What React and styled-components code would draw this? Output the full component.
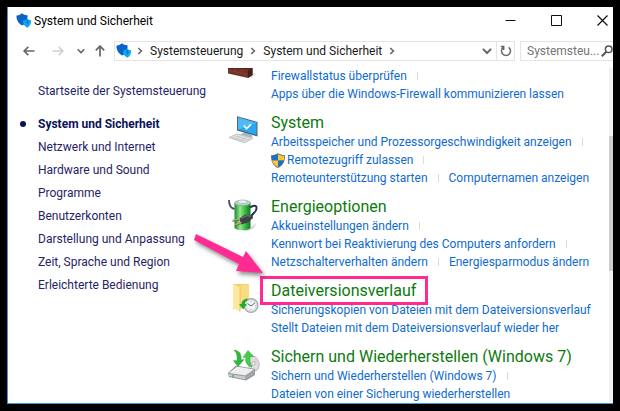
import React from "react";
import styled, { createGlobalStyle } from "styled-components";

const GlobalStyle = createGlobalStyle`
  *, *::before, *::after { box-sizing: border-box; }
  html, body, #root { height: 100%; }
  body {
    margin: 0;
    background: #000;
    font-family: Roboto, "Noto Sans", sans-serif;
    font-size: 12px;
    line-height: 18px;
    color: #1a1a1a;
  }
  a { text-decoration: none; color: inherit; white-space: nowrap; }
  button, input { font: inherit; color: inherit; }
  svg { display: block; flex: none; }
`;

const Desktop = styled.div`
  height: 100%;
  padding: 7px;
`;

const Window = styled.div`
  position: relative;
  height: 100%;
  display: flex;
  flex-direction: column;
  overflow: hidden;
  background: #fff;
  border-left: 1px solid #3a94d6;
  border-bottom: 1px solid #3a9ee0;
`;

const TitleBar = styled.header`
  flex: none;
  height: 27px;
  display: flex;
  align-items: center;
  padding-left: 8px;
`;

const Title = styled.h1`
  flex: 1;
  margin: 0 0 0 2px;
  font-size: 12px;
  font-weight: 400;
  color: #000;
  white-space: nowrap;
`;

const IconButton = styled.button`
  flex: none;
  display: flex;
  align-items: center;
  justify-content: center;
  width: ${(p) => p.$width}px;
  height: 100%;
  padding: 0;
  border: 0;
  background: none;
  color: ${(p) => p.$color || "#666"};
`;

const WindowButtons = styled.div`
  display: flex;
  align-self: stretch;
  margin-right: -12px;
`;

const NavBar = styled.nav`
  flex: none;
  display: flex;
  height: 20px;
  margin-top: 7px;
  padding-left: 10px;
`;

const AddressBar = styled.div`
  flex: 1;
  display: flex;
  align-items: center;
  min-width: 0;
  border: 1px solid #e4e4e4;
  padding-left: 1px;
`;

const Crumbs = styled.div`
  flex: 1;
  display: flex;
  align-items: center;
  gap: 6px;
  margin-left: 4px;
`;

const RefreshCell = styled.div`
  height: 100%;
  border-left: 1px solid #e4e4e4;
`;

const Search = styled.label`
  flex: none;
  display: flex;
  align-items: center;
  width: 93px;
  margin-left: 5px;
  border: 1px solid #e4e4e4;
  border-right: 0;
  color: #666;
`;

const SearchInput = styled.input`
  flex: 1;
  min-width: 0;
  padding: 0 0 0 6px;
  border: 0;
  outline: 0;
  background: none;
  &::placeholder { color: #757575; opacity: 1; }
`;

const Body = styled.div`
  flex: 1;
  min-height: 0;
  display: grid;
  grid-template-columns: 219px minmax(0, 1fr) 4px;
  margin-top: 7px;
`;

const Sidebar = styled.aside`
  padding: 12px 0 0 30px;
  color: #1f2466;
  line-height: 23px;
`;

const CategoryList = styled.ul`
  list-style: none;
  margin: 10px 0 0;
  padding: 0;
`;

const Category = styled.li`
  position: relative;
  font-weight: ${(p) => (p.$current ? 700 : 400)};
  color: ${(p) => (p.$current ? "#0b1257" : "inherit")};
  &::before {
    content: "";
    display: ${(p) => (p.$current ? "block" : "none")};
    position: absolute;
    left: -18px;
    top: 8px;
    width: 6px;
    height: 6px;
    border-radius: 50%;
    background: #0b1257;
  }
`;

const Content = styled.main`
  min-height: 0;
  overflow: hidden;
  display: flex;
  flex-direction: column;
  gap: 8px;
`;

const Section = styled.section`
  flex: none;
  display: grid;
  grid-template-columns: 34px minmax(0, 1fr);
  column-gap: 10px;
  margin-top: ${(p) => (p.$scrolled ? -1 : 0)}px;
`;

const IconSlot = styled.div`
  padding-top: ${(p) => (p.$scrolled ? 1 : 4)}px;
  padding-left: 1px;
`;

const Heading = styled.h2`
  margin: 0;
  padding-top: 2px;
  font-size: 16px;
  line-height: 20px;
  font-weight: 400;
  color: #0c7a0c;
`;

const TaskRow = styled.div`
  display: flex;
  align-items: center;
  height: 18px;
  color: #0f6bd0;
  white-space: nowrap;
`;

const Task = styled.a`
  display: flex;
  align-items: center;
  gap: 2px;
`;

const Separator = styled.span`
  width: 1px;
  height: 8px;
  margin: 0 10px;
  background: #d9d9d9;
`;

const Highlight = styled.span`
  position: relative;
  &::after {
    content: "";
    position: absolute;
    inset: -5px -12px -5px -11px;
    border: 3px solid #ff2a92;
  }
`;

const Scrollbar = styled.div`
  background: #f1f1f1;
  padding-top: 68px;
`;

const ScrollThumb = styled.div`
  height: 135px;
  background: #cdcdcd;
`;

const PointerArrow = styled.svg`
  position: absolute;
  left: 182px;
  top: 226px;
  filter: drop-shadow(2px 3px 2px rgba(0, 0, 0, 0.45));
`;

const SecurityIcon = () => (
  <svg width="16" height="16" viewBox="0 0 16 16">
    <path d="M.5 2.500C3 2.600 4.500 1.500 6 .3 7.500 1.500 9 2.300 11.500 2.200 12 7 10 10.500 6.300 12.500 2.500 10.500.2 7 .5 2.500Z" fill="#0a63c9" />
    <path d="M7 7.600C8.500 7.600 9.800 7 11.200 5.800 12.500 7 13.700 7.300 15 7.100 15.400 10.500 14 13.300 11.500 14.800 8.500 13.500 6.900 11 7 7.600Z" fill="#0baaf0" />
    <path d="m11.300 7-1.200 2.800h1.300l-.6 2.700 2.200-3.500h-1.400l.9-2Z" fill="#0a63c9" />
  </svg>
);

const Arrow = ({ turn = 0 }) => (
  <svg width="12" height="12" viewBox="0 0 12 12" fill="none" stroke="currentColor" strokeWidth="1.7">
    <path transform={`rotate(${turn} 6 6)`} d="M11.500 6H1M5.300 1.800 1.100 6l4.200 4.200" />
  </svg>
);

const Chevron = ({ down, size = 8 }) => (
  <svg width={size} height={size} viewBox="0 0 8 8" fill="none" stroke="#666" strokeWidth="1.6">
    <path d={down ? "M.7 2.300 4 5.600l3.300-3.300" : "M2.300 1 5.400 4 2.300 7"} />
  </svg>
);

const RefreshIcon = () => (
  <svg width="12" height="12" viewBox="0 0 12 12" fill="none" stroke="#666" strokeWidth="1.5">
    <path d="M8.700 2.300A4.500 4.500 0 1 1 3.300 2.300M3.700 5V1.500H.8" />
  </svg>
);

const SearchIcon = () => (
  <svg width="12" height="12" viewBox="0 0 12 12" fill="none" stroke="#555">
    <circle cx="7.700" cy="4.200" r="3.300" strokeWidth="1.500" />
    <path d="M5.300 6.700.8 11.200" strokeWidth="2" />
  </svg>
);

const FirewallIcon = () => (
  <svg width="30" height="12" viewBox="0 0 30 12">
    <path d="m21 8 6-3 1 1-5 4Z" fill="#bbb" opacity=".5" />
    <path d="M0 0h24.500v7L20 10 0 5.500Z" fill="#713126" />
    <path d="M20 2.500 24.500 0v7L20 10Z" fill="#43201b" />
    <path d="M0 2.500 20 6.500M7 0v4M14 0v5M10.500 4.500V8M17 6v3" stroke="#8d4a3a" strokeWidth=".6" />
    <path d="M0 0h24" stroke="#3d1d18" />
  </svg>
);

const ComputerIcon = () => (
  <svg width="32" height="30" viewBox="0 0 32 30">
    <path d="m18 16 7 5-3 2-10-3Z" fill="#aeb7bd" />
    <path d="M9 1.200 29.500 7v14.500L9 15.500Z" fill="#4b6675" />
    <path d="M10 2.600 28.500 7.800v12L10 14.500Z" fill="#28a7f3" />
    <path d="M10 2.600 28.500 7.800 10 14.500Z" fill="#4fbafa" />
    <path d="m16 10.500 2.500 3.200 4.600-4.600" fill="none" stroke="#fff" strokeWidth="1.600" />
    <path d="m1 22.500 8-3.700 16 4.400-8.500 4.600Z" fill="#dfe3e5" stroke="#b3babd" strokeWidth=".8" />
    <path d="m4 22.500 15 4M7 21l15 4M8 23.800l5-3.500M13 25.500l5.500-3.600" stroke="#b8bec1" strokeWidth=".6" />
  </svg>
);

const PowerIcon = () => (
  <svg width="32" height="34" viewBox="0 0 32 34">
    <defs>
      <linearGradient id="battery">
        <stop offset="0" stopColor="#168c28" />
        <stop offset=".35" stopColor="#8fe88a" />
        <stop offset=".65" stopColor="#3cbd46" />
        <stop offset="1" stopColor="#0b7a20" />
      </linearGradient>
    </defs>
    <path d="M14 30c6-1 11-2 14-6-1 6-6 8-12 8Z" fill="#bbb" opacity=".6" />
    <path d="M6.500 4v25c2 3 14 3 16 0V4Z" fill="url(#battery)" />
    <ellipse cx="14.500" cy="4" rx="8" ry="2.800" fill="#b9cfc4" stroke="#6d9a80" strokeWidth=".6" />
    <ellipse cx="14.500" cy="2.700" rx="4.200" ry="1.600" fill="#eef4fb" stroke="#9fabc2" strokeWidth=".5" />
    <path d="M1 1c0 5 1 8 5.500 9" fill="none" stroke="#454a66" strokeWidth="1.800" />
    <path d="M22 8.500c4-3 7-2 6.500 1-.5 4-3 4-5.500 8" fill="none" stroke="#2c3050" strokeWidth="2" />
    <path d="M11.500 19.500 17 15.500l7.500.5.500 3-5 4.500-7 2Z" fill="#3f3f46" />
    <path d="m13 19.500 5-2.700 5 .2" fill="none" stroke="#85858c" strokeWidth=".9" />
    <path d="m4.500 21.500 7.500-1.500M7 26l6.500-2.500" stroke="#c2a184" strokeWidth="1.700" />
    <path d="m4.500 22.500 7-1.500M7 27l6.500-2.500" stroke="#5a4334" strokeWidth=".6" />
  </svg>
);

const FileHistoryIcon = () => (
  <svg width="34" height="32" viewBox="0 0 34 32">
    <path d="M5 1h16v19l-9 6H5Z" fill="#f1cf69" />
    <path d="M12 3.500 14 1.500h7V23h-9Z" fill="#f8dc82" />
    <path d="m5 1 7 3.500v24L5 25Z" fill="#ffe9a0" />
    <path d="M12 4.500v24" stroke="#e0b650" strokeWidth=".7" />
    <circle cx="23" cy="22.500" r="6.900" fill="#d8dbdc" stroke="#a3a8aa" strokeWidth="1.200" />
    <circle cx="23" cy="22.500" r="5" fill="#f3f5f5" />
    <path d="m19.500 20.500 3.500 2.500 4-3.200" fill="none" stroke="#666" strokeWidth="1" />
    <path d="M23 18.300v1M23 26v1M27 23h1M18.500 23h1" stroke="#999" strokeWidth=".8" />
    <path d="M19.500 15.500c-4 .5-6 3-6 5.500H11l4.200 5.500L19 21h-2.200c0-2 1-3 2.700-3.500Z" fill="#25ab2b" />
  </svg>
);

const BackupIcon = () => (
  <svg width="34" height="34" viewBox="0 0 34 34">
    <ellipse cx="25.500" cy="14.500" rx="5.500" ry="7.500" fill="#dcdee2" stroke="#bbb" transform="rotate(-15 25.500 14.500)" />
    <path d="m25 14 3-6 3 5Z" fill="#f0c7d7" />
    <circle cx="25.500" cy="14.500" r="1.700" fill="#fff" stroke="#aaa" />
    <path d="m0 24 8-7.500L27 20v6L18 31.500 1 28Z" fill="#8f9396" />
    <path d="m1 24 8-6.500 17 3-8.500 6Z" fill="#eceeef" />
    <path d="m1 25 16.500 2.500v3L1 27Z" fill="#cbcfd1" />
    <path d="M17.500 27.500 26.500 21v4.500l-9 5Z" fill="#a3a7aa" />
    <circle cx="5" cy="27" r="1" fill="#20c83a" />
    <path d="M6 1c6 1 7.500 4 7 10l3-.5-6 7-4.500-6 3.500.5C9.500 7 9 4 6 1Z" fill="#33b93a" stroke="#1d9a2a" strokeWidth=".5" />
    <path d="M24 18c-6-2-7-6-6-10l-3 .5 5-7 5.500 6-3.500-.3c-.5 4 0 7 2 10.800Z" fill="#43d047" stroke="#1d9a2a" strokeWidth=".5" />
  </svg>
);

const UacShield = () => (
  <svg width="14" height="15" viewBox="0 0 14 15">
    <path d="M0 2.200C3 2.200 5 1.300 7 0c2 1.300 4 2.200 7 2.200C14.300 8 12 12.500 7 15 2 12.500-.3 8 0 2.200Z" fill="#6d7478" />
    <path d="M7 1v6.500H1C.8 6 .8 4.500 1 3 3.500 3 5.200 2.200 7 1Z" fill="#1672d1" />
    <path d="M7 1v6.500h6c.2-1.500.2-3 0-4.500C10.500 3 8.800 2.200 7 1Z" fill="#ffc62b" />
    <path d="M7 7.500V14c-3.300-1.700-5.300-3.800-6-6.500Z" fill="#ffc62b" />
    <path d="M7 7.500V14c3.300-1.700 5.300-3.800 6-6.500Z" fill="#1672d1" />
  </svg>
);

const MinimizeIcon = () => (
  <svg width="11" height="11" viewBox="0 0 11 11" stroke="#111"><path d="M.5 5.500h10" /></svg>
);
const MaximizeIcon = () => (
  <svg width="11" height="11" viewBox="0 0 11 11" fill="none" stroke="#111"><path d="M.5.5h10v10H.5Z" /></svg>
);
const CloseIcon = () => (
  <svg width="11" height="11" viewBox="0 0 11 11" stroke="#111" strokeWidth="1.200"><path d="m.5.5 10 10M10.500.5l-10 10" /></svg>
);

const categories = [
  "System und Sicherheit",
  "Netzwerk und Internet",
  "Hardware und Sound",
  "Programme",
  "Benutzerkonten",
  "Darstellung und Anpassung",
  "Zeit, Sprache und Region",
  "Erleichterte Bedienung",
];

// Each row lists its tasks; `open` adds a divider after the last one.
const sections = [
  {
    icon: FirewallIcon,
    rows: [
      { tasks: ["Firewallstatus überprüfen"], open: true },
      { tasks: ["Apps über die Windows-Firewall kommunizieren lassen"] },
    ],
  },
  {
    title: "System",
    icon: ComputerIcon,
    rows: [
      { tasks: ["Arbeitsspeicher und Prozessorgeschwindigkeit anzeigen"], open: true },
      { tasks: ["Remotezugriff zulassen"], open: true, shield: true },
      { tasks: ["Remoteunterstützung starten", "Computernamen anzeigen"] },
    ],
  },
  {
    title: "Energieoptionen",
    icon: PowerIcon,
    rows: [
      { tasks: ["Akkueinstellungen ändern"], open: true },
      { tasks: ["Kennwort bei Reaktivierung des Computers anfordern"], open: true },
      { tasks: ["Netzschalterverhalten ändern", "Energiesparmodus ändern"] },
    ],
  },
  {
    title: "Dateiversionsverlauf",
    icon: FileHistoryIcon,
    highlighted: true,
    rows: [
      { tasks: ["Sicherungskopien von Dateien mit dem Dateiversionsverlauf"] },
      { tasks: ["Stellt Dateien mit dem Dateiversionsverlauf wieder her"] },
    ],
  },
  {
    title: "Sichern und Wiederherstellen (Windows 7)",
    icon: BackupIcon,
    rows: [
      { tasks: ["Sichern und Wiederherstellen (Windows 7)"], open: true },
      { tasks: ["Dateien von einer Sicherung wiederherstellen"] },
    ],
  },
];

function Tasks({ tasks, open, shield }) {
  return (
    <TaskRow>
      {tasks.map((task, i) => (
        <React.Fragment key={task}>
          {i > 0 && <Separator />}
          <Task href="#">
            {shield && <UacShield />}
            {task}
          </Task>
        </React.Fragment>
      ))}
      {open && <Separator />}
    </TaskRow>
  );
}

export default function App() {
  return (
    <Desktop>
      <GlobalStyle />
      <Window>
        <TitleBar>
          <SecurityIcon />
          <Title>System und Sicherheit</Title>
          <WindowButtons>
            <IconButton $width={46} aria-label="Minimieren"><MinimizeIcon /></IconButton>
            <IconButton $width={46} aria-label="Maximieren"><MaximizeIcon /></IconButton>
            <IconButton $width={46} aria-label="Schließen"><CloseIcon /></IconButton>
          </WindowButtons>
        </TitleBar>
        <NavBar>
          <IconButton $width={21} aria-label="Zurück"><Arrow /></IconButton>
          <IconButton $width={37} $color="#d0d0d0" aria-label="Vorwärts"><Arrow turn={180} /></IconButton>
          <IconButton $width={10} aria-label="Verlauf"><Chevron down /></IconButton>
          <IconButton $width={28} aria-label="Nach oben"><Arrow turn={90} /></IconButton>
          <AddressBar>
            <SecurityIcon />
            <Crumbs>
              <Chevron />
              <a href="#">Systemsteuerung</a>
              <Chevron />
              <a href="#">System und Sicherheit</a>
              <Chevron />
            </Crumbs>
            <IconButton $width={18} aria-label="Vorherige Orte"><Chevron down size={10} /></IconButton>
            <RefreshCell>
              <IconButton $width={17} aria-label="Aktualisieren"><RefreshIcon /></IconButton>
            </RefreshCell>
          </AddressBar>
          <Search>
            <SearchInput type="text" aria-label="Systemsteuerung durchsuchen" placeholder="Systemsteu..." />
            <SearchIcon />
          </Search>
        </NavBar>
        <Body>
          <Sidebar>
            <a href="#">Startseite der Systemsteuerung</a>
            <CategoryList>
              {categories.map((name, i) => (
                <Category key={name} $current={i === 0}>
                  <a href="#">{name}</a>
                </Category>
              ))}
            </CategoryList>
          </Sidebar>
          <Content>
            {sections.map(({ title, icon: Icon, rows, highlighted }) => (
              <Section key={title || "firewall"} $scrolled={!title}>
                <IconSlot $scrolled={!title}><Icon /></IconSlot>
                <div>
                  {title && (
                    <Heading>
                      {highlighted ? <Highlight><a href="#">{title}</a></Highlight> : <a href="#">{title}</a>}
                    </Heading>
                  )}
                  {rows.map((row) => <Tasks key={row.tasks[0]} {...row} />)}
                </div>
              </Section>
            ))}
          </Content>
          <Scrollbar><ScrollThumb /></Scrollbar>
        </Body>
        <PointerArrow width="84" height="52" viewBox="0 0 84 52" aria-hidden="true">
          <path d="M6 1 53 24 56 18 73 40 46 38 49 31 4 7Z" fill="#ff2a92" />
        </PointerArrow>
      </Window>
    </Desktop>
  );
}
